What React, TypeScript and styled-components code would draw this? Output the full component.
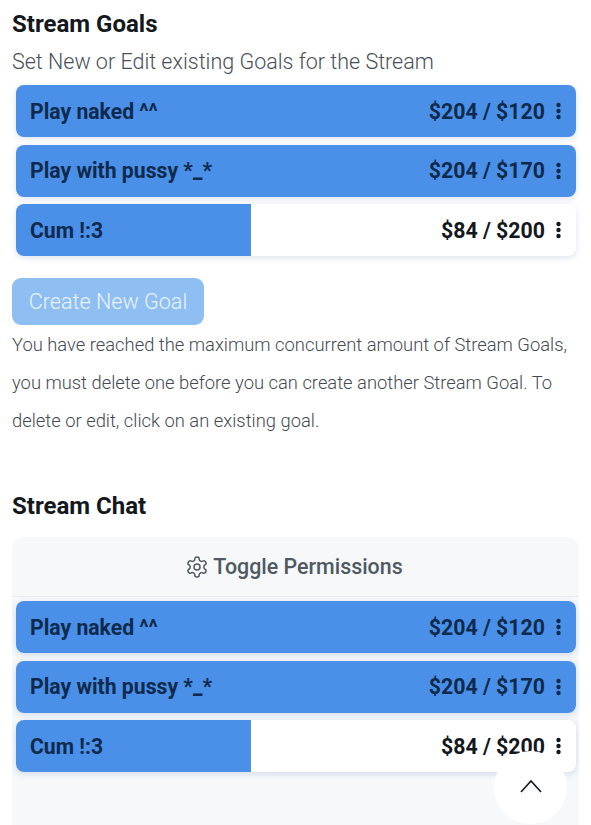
import React from 'react';
import styled, { createGlobalStyle } from 'styled-components';

const GlobalStyle = createGlobalStyle`
  html, body {
    margin: 0;
    padding: 0;
    background: #fff;
    font-family: Roboto, "Liberation Sans", sans-serif;
    overflow: hidden;
  }
`;

const Page = styled.div`
  position: relative;
  width: 591px;
  height: 825px;
  overflow: hidden;
  padding: 8px 12px 0;
  box-sizing: border-box;
`;

const Heading = styled.h2`
  margin: 0;
  height: 33px;
  font-size: 24px;
  line-height: 33px;
  font-weight: 700;
  color: #14181d;
`;

const Subtitle = styled.p`
  margin: 5px 0 7px;
  height: 32px;
  font-size: 21.5px;
  line-height: 32px;
  font-weight: 300;
  color: #47505a;
`;

const GoalList = styled.div`
  display: flex;
  flex-direction: column;
  gap: 7.5px;
  padding: 0 3px 0 4px;
`;

const GoalBar = styled.div`
  position: relative;
  height: 52px;
  border-radius: 8px;
  background: #fff;
  overflow: hidden;
  box-shadow: 0 2px 6px rgba(60, 100, 160, 0.18);
`;

const Fill = styled.div<{ $percent: number }>`
  position: absolute;
  top: 0;
  bottom: 0;
  left: 0;
  width: ${(p) => p.$percent}%;
  background: #4a90e9;
`;

const GoalRow = styled.div`
  position: relative;
  display: flex;
  align-items: center;
  justify-content: space-between;
  height: 100%;
  padding: 0 14px 0 14px;
`;

const GoalName = styled.span`
  font-size: 21.2px;
  font-weight: 700;
  color: #0f2a4c;
`;

const GoalRight = styled.div<{ $full: boolean }>`
  display: flex;
  align-items: center;
  gap: 10px;
  font-size: 21.3px;
  font-weight: 700;
  color: ${(p) => (p.$full ? '#0f2a4c' : '#14181d')};
`;

const CreateButton = styled.button`
  display: block;
  margin: 22px 0 0;
  width: 192px;
  height: 47px;
  border: none;
  border-radius: 9px;
  background: #8fbef3;
  color: #e9f4ff;
  font-family: inherit;
  font-size: 21.6px;
  font-weight: 300;
  padding: 0;
`;

const Notice = styled.p`
  margin: 0;
  padding-top: 1px;
  font-size: 18.37px;
  line-height: 38px;
  font-weight: 300;
  color: #424a53;
  white-space: nowrap;
`;

const ChatHeading = styled(Heading)`
  margin-top: 50px;
`;

const Panel = styled.div`
  margin-top: 14px;
  height: 300px;
  background: #f6f8fa;
  border-radius: 12px 12px 0 0;
`;

const PanelHeader = styled.div`
  display: flex;
  align-items: center;
  justify-content: center;
  gap: 4px;
  height: 59px;
  border-bottom: 1px solid #e8eaed;
  margin-bottom: 4px;
  padding-right: 3px;
  font-size: 21.4px;
  font-weight: 500;
  color: #505862;
`;

const ScrollTop = styled.div`
  position: absolute;
  left: 494px;
  top: 751px;
  width: 73px;
  height: 73px;
  border-radius: 50%;
  background: #fff;
  display: flex;
  align-items: center;
  justify-content: center;
  padding-bottom: 4px;
  box-sizing: border-box;
`;

const Dots = ({ color }: { color: string }) => (
  <svg width="7" height="18" viewBox="0 0 7 18">
    <circle cx="3.5" cy="3" r="2.2" fill={color} />
    <circle cx="3.5" cy="9" r="2.2" fill={color} />
    <circle cx="3.5" cy="15" r="2.2" fill={color} />
  </svg>
);

const Gear = () => (
  <svg width="24" height="24" viewBox="0 0 24 24" fill="none" stroke="#505862" strokeWidth="1.5" strokeLinecap="round" strokeLinejoin="round">
    <path d="M12.22 2h-.44a2 2 0 0 0-2 2v.18a2 2 0 0 1-1 1.73l-.43.25a2 2 0 0 1-2 0l-.15-.08a2 2 0 0 0-2.73.73l-.22.38a2 2 0 0 0 .73 2.73l.15.1a2 2 0 0 1 1 1.72v.51a2 2 0 0 1-1 1.74l-.15.09a2 2 0 0 0-.73 2.73l.22.38a2 2 0 0 0 2.73.73l.15-.08a2 2 0 0 1 2 0l.43.25a2 2 0 0 1 1 1.73V20a2 2 0 0 0 2 2h.44a2 2 0 0 0 2-2v-.18a2 2 0 0 1 1-1.73l.43-.25a2 2 0 0 1 2 0l.15.08a2 2 0 0 0 2.73-.73l.22-.39a2 2 0 0 0-.73-2.73l-.15-.08a2 2 0 0 1-1-1.74v-.5a2 2 0 0 1 1-1.74l.15-.09a2 2 0 0 0 .73-2.73l-.22-.38a2 2 0 0 0-2.73-.73l-.15.08a2 2 0 0 1-2 0l-.43-.25a2 2 0 0 1-1-1.73V4a2 2 0 0 0-2-2z" />
    <circle cx="12" cy="12" r="3" />
  </svg>
);

interface Goal {
  name: string;
  current: number;
  target: number;
}

const goals: Goal[] = [
  { name: 'Play naked ^^', current: 204, target: 120 },
  { name: 'Play with pussy *_*', current: 204, target: 170 },
  { name: 'Cum !:3', current: 84, target: 200 },
];

const Goals = () => (
  <GoalList>
    {goals.map((goal) => {
      const full = goal.current >= goal.target;
      return (
        <GoalBar key={goal.name}>
          <Fill $percent={Math.min(100, (goal.current / goal.target) * 100)} />
          <GoalRow>
            <GoalName>{goal.name}</GoalName>
            <GoalRight $full={full}>
              ${goal.current} / ${goal.target}
              <Dots color={full ? '#0f2a4c' : '#14181d'} />
            </GoalRight>
          </GoalRow>
        </GoalBar>
      );
    })}
  </GoalList>
);

const App: React.FC = () => (
  <Page>
    <GlobalStyle />
    <Heading>Stream Goals</Heading>
    <Subtitle>Set New or Edit existing Goals for the Stream</Subtitle>
    <Goals />
    <CreateButton>Create New Goal</CreateButton>
    <Notice>
      You have reached the maximum concurrent amount of Stream Goals,
      <br />
      you must delete one before you can create another Stream Goal. To
      <br />
      delete or edit, click on an existing goal.
    </Notice>
    <ChatHeading>Stream Chat</ChatHeading>
    <Panel>
      <PanelHeader>
        <Gear />
        Toggle Permissions
      </PanelHeader>
      <Goals />
    </Panel>
    <ScrollTop>
      <svg width="24" height="16" viewBox="0 0 24 16" fill="none" stroke="#14181d" strokeWidth="1.6">
        <path d="M2 14 L12 3 L22 14" />
      </svg>
    </ScrollTop>
  </Page>
);

export default App;
